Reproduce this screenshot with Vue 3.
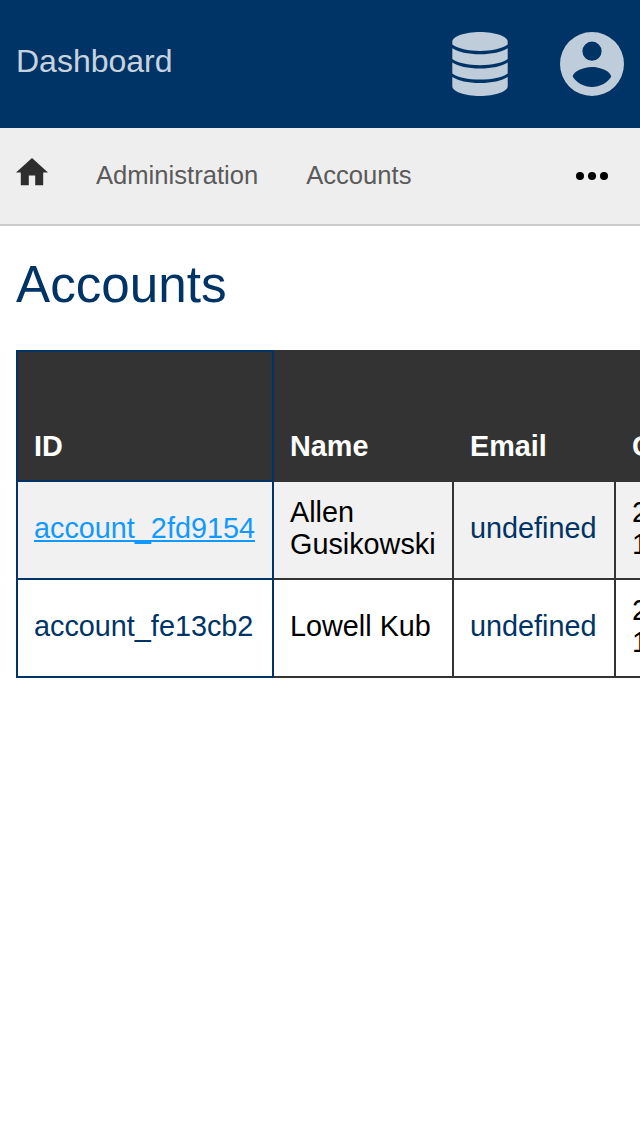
<script setup>
const columns = ['ID', 'Name', 'Email', 'Created']
const accounts = [
  { id: 'account_2fd9154', name: 'Allen Gusikowski', email: 'undefined', created: ['2018-04-12', '14:20:08'], active: true },
  { id: 'account_fe13cb2', name: 'Lowell Kub', email: 'undefined', created: ['2018-04-12', '14:20:07'], active: false },
]
</script>

<template>
  <div class="page">
    <header class="topbar">
      <span class="brand">Dashboard</span>
      <div class="tools">
        <svg class="database" viewBox="0 0 56 64">
          <path d="M28 0C43 0 55.700 4.400 55.700 9.700V12.600C50 16.800 40 19 28 19S6 16.800 .3 12.600V9.700C.3 4.400 13 0 28 0Z" />
          <path d="M.3 16.200C6 20 16 22.200 28 22.200S50 20 55.700 16.200V27C50 31 40 33.200 28 33.200S6 31 .3 27Z" />
          <path d="M.3 30.600C6 34.400 16 36.600 28 36.600S50 34.400 55.700 30.600V41.400C50 45.400 40 47.600 28 47.600S6 45.400 .3 41.400Z" />
          <path d="M.3 45C6 48.800 16 51 28 51S50 48.800 55.700 45V54.300C55.700 59.600 43 64 28 64S.3 59.600 .3 54.300Z" />
        </svg>
        <svg class="user" viewBox="2 2 20 20">
          <path d="M12 19.200c-2.500 0-4.710-1.280-6-3.200.03-2 4-3.100 6-3.100s5.970 1.100 6 3.100c-1.290 1.920-3.500 3.200-6 3.200M12 5a3 3 0 0 1 0 6 3 3 0 0 1 0-6m0-3a10 10 0 1 0 0 20 10 10 0 0 0 0-20z" fill-rule="evenodd" />
        </svg>
      </div>
    </header>

    <nav class="crumbs">
      <svg class="home" viewBox="2 3 20 17"><path d="M10 20v-6h4v6h5v-8h3L12 3 2 12h3v8z" /></svg>
      <span>Administration</span>
      <span>Accounts</span>
      <svg class="more" viewBox="0 0 32 8">
        <circle cx="4" cy="4" r="4" /><circle cx="16" cy="4" r="4" /><circle cx="28" cy="4" r="4" />
      </svg>
    </nav>

    <main>
      <h1>Accounts</h1>
      <table>
        <colgroup><col class="c-id"><col class="c-name"><col class="c-email"><col class="c-date"></colgroup>
        <thead>
          <tr><th v-for="c in columns" :key="c">{{ c }}</th></tr>
        </thead>
        <tbody>
          <tr v-for="a in accounts" :key="a.id" :class="{ active: a.active }">
            <td class="link">{{ a.id }}</td>
            <td>{{ a.name }}</td>
            <td class="mail">{{ a.email }}</td>
            <td>{{ a.created[0] }}<br>{{ a.created[1] }}</td>
          </tr>
        </tbody>
      </table>
    </main>
  </div>
</template>

<style>
body { background: #fff; }
</style>

<style scoped>
.page {
  height: 1136px;
  overflow: hidden;
  font-family: "Liberation Sans", Arial, sans-serif;
  color: #000;
}
.topbar {
  height: 128px;
  box-sizing: border-box;
  padding: 0 16px;
  display: flex;
  align-items: center;
  justify-content: space-between;
  background: #003366;
}
.brand {
  font-size: 32px;
  line-height: 37px;
  padding-bottom: 5px;
  color: rgba(255, 255, 255, 0.8);
}
.tools { display: flex; gap: 52px; fill: #bfccd9; }
.database { width: 56px; height: 64px; }
.user { width: 64px; height: 64px; }
.crumbs {
  height: 98px;
  box-sizing: border-box;
  padding: 0 32px 0 16px;
  display: flex;
  align-items: center;
  gap: 48px;
  background: #eee;
  border-bottom: 2px solid #ccc;
  font-size: 25.6px;
  color: #5a5a5a;
}
.crumbs span { padding-bottom: 2px; }
.home { width: 32px; height: 27.2px; padding-bottom: 8px; fill: #2d2d2d; }
.more { width: 32px; height: 8px; margin-left: auto; fill: #000; }
main { padding: 30px 0 0 16px; }
h1 {
  margin: 0 0 36px;
  font-size: 51.2px;
  line-height: 58px;
  font-weight: 400;
  color: #003366;
}
table {
  width: 800px;
  table-layout: fixed;
  border-collapse: collapse;
  font-size: 28.8px;
  line-height: 32px;
}
.c-id { width: 256px; }
.c-name { width: 180px; }
.c-email { width: 162px; }
th, td {
  box-sizing: border-box;
  padding: 0 16px 4px;
  border: 2px solid #333;
  text-align: left;
}
th {
  height: 130px;
  padding-bottom: 18px;
  vertical-align: bottom;
  background: #333;
  color: #fff;
}
td { height: 98px; vertical-align: middle; }
th:first-child, td:first-child { border-color: #003366; }
.link, .mail { color: #003366; }
.active td { background: #f1f1f1; }
.active .link { color: #1199ff; text-decoration: underline; }
</style>
